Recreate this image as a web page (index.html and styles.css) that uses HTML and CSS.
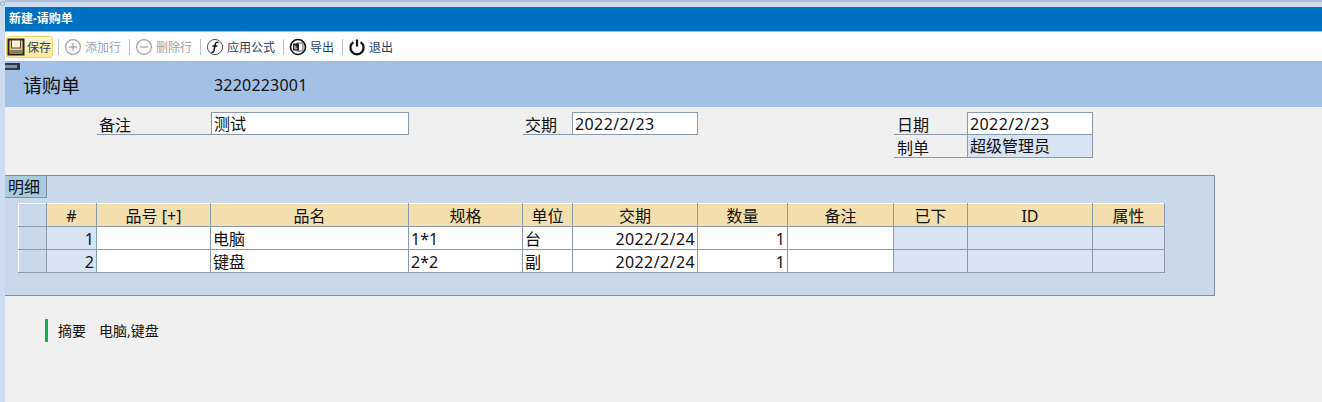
FILE: index.html
```html
<!DOCTYPE html>
<html lang="zh-CN">
<head>
<meta charset="utf-8">
<title>新建-请购单</title>
<link rel="stylesheet" href="styles.css">
</head>
<body>
<div class="app">
  <aside class="rail"><i class="ring"></i></aside>
  <div class="main">
    <div class="topstrip"></div>
    <header class="titlebar">新建-请购单</header>
    <nav class="toolbar">
      <button class="tool tool-active">
        <svg class="ico" viewBox="0 0 18 18"><rect x="1.5" y="1.5" width="15" height="15" fill="#e9d596" stroke="#222" stroke-width="2"/><rect x="4.5" y="2" width="9" height="8" fill="#fbf1cf" stroke="#4a4232" stroke-width="1"/><rect x="3" y="12" width="12" height="3.5" fill="#8d7f5c"/></svg>
        <span>保存</span>
      </button>
      <i class="sep"></i>
      <button class="tool tool-off">
        <svg class="ico" viewBox="0 0 18 18"><circle cx="9" cy="9" r="7.4" fill="none" stroke="#a6a6a6" stroke-width="1.3"/><path d="M9 5v8M5 9h8" stroke="#a6a6a6" stroke-width="1.3"/></svg>
        <span>添加行</span>
      </button>
      <i class="sep"></i>
      <button class="tool tool-off">
        <svg class="ico" viewBox="0 0 18 18"><circle cx="9" cy="9" r="7.4" fill="none" stroke="#a6a6a6" stroke-width="1.3"/><path d="M5 9h8" stroke="#a6a6a6" stroke-width="1.3"/></svg>
        <span>删除行</span>
      </button>
      <i class="sep"></i>
      <button class="tool">
        <svg class="ico" viewBox="0 0 18 18"><circle cx="9" cy="9" r="7.6" fill="none" stroke="#555" stroke-width="1"/><path d="M12.4 4.6c-1.4-.8-2.6-.2-3 1.6L8 12.6c-.4 1.6-1.4 2-2.6 1.4M6.4 8h5" fill="none" stroke="#111" stroke-width="1.5"/></svg>
        <span>应用公式</span>
      </button>
      <i class="sep"></i>
      <button class="tool">
        <svg class="ico" viewBox="0 0 18 18"><circle cx="9" cy="9" r="7.5" fill="#fff" stroke="#111" stroke-width="1.6"/><rect x="8" y="5" width="6" height="8" fill="#fff" stroke="#333" stroke-width=".8"/><rect x="4" y="5.5" width="6" height="7" fill="#222"/><path d="M5.8 7.2v3.6h2.6M5.8 9h2" stroke="#fff" stroke-width=".8" fill="none"/></svg>
        <span>导出</span>
      </button>
      <i class="sep"></i>
      <button class="tool">
        <svg class="ico" viewBox="0 0 18 18"><path d="M5.4 4.2a6.6 6.6 0 1 0 7.2 0" fill="none" stroke="#111" stroke-width="2.2"/><path d="M9 1.5v7" stroke="#111" stroke-width="2.2"/></svg>
        <span>退出</span>
      </button>
    </nav>
    <section class="band">
      <span class="handle"></span>
      <h1 class="doc-title">请购单</h1>
      <span class="doc-no">3220223001</span>
    </section>
    <section class="form">
      <label class="lbl lbl-a">备注</label><div class="val val-a">测试</div>
      <label class="lbl lbl-b">交期</label><div class="val val-b date">2022/2/23</div>
      <label class="lbl lbl-c">日期</label><div class="val val-c date">2022/2/23</div>
      <label class="lbl lbl-c lbl-c2">制单</label><div class="val val-c2 val-ro">超级管理员</div>
    </section>
    <section class="panel">
      <div class="tab">明细</div>
      <table class="grid">
        <colgroup>
          <col class="c0"><col class="c1"><col class="c2"><col class="c3"><col class="c4"><col class="c5"><col class="c6"><col class="c7"><col class="c8"><col class="c9"><col class="c10"><col class="c11">
        </colgroup>
        <thead>
          <tr><th class="rowh"></th><th>#</th><th>品号 [+]</th><th>品名</th><th>规格</th><th>单位</th><th>交期</th><th>数量</th><th>备注</th><th>已下</th><th>ID</th><th>属性</th></tr>
        </thead>
        <tbody>
          <tr><td class="rowh"></td><td class="ro num">1</td><td></td><td>电脑</td><td>1*1</td><td>台</td><td class="num date">2022/2/24</td><td class="num">1</td><td></td><td class="ro"></td><td class="ro"></td><td class="ro"></td></tr>
          <tr><td class="rowh"></td><td class="ro num">2</td><td></td><td>键盘</td><td>2*2</td><td>副</td><td class="num date">2022/2/24</td><td class="num">1</td><td></td><td class="ro"></td><td class="ro"></td><td class="ro"></td></tr>
        </tbody>
      </table>
    </section>
    <section class="summary"><span class="sum-label">摘要</span><span>电脑,键盘</span></section>
  </div>
</div>
</body>
</html>
```
FILE: styles.css
```css
* { box-sizing: border-box; }
html, body { margin: 0; height: 100%; overflow: hidden; }
body { background: #f0f0f0; color: #111; font-family: "Noto Sans", "Noto Sans CJK SC", sans-serif; font-size: 16px; }
.app { display: flex; height: 402px; }
.rail { position: relative; width: 5px; flex: none; background: #cddcf0; }
.ring { position: absolute; left: 0; top: 1px; width: 5px; height: 5px; border: 1px solid #8aa0c0; border-radius: 50%; }
.main { flex: 1; min-width: 0; display: flex; flex-direction: column; }
.topstrip { height: 7px; background: #cddcf0; border-top: 2px solid #a9bddc; }
.titlebar { height: 24px; background: #0070c0; color: #fff; font-size: 12px; font-weight: 700; line-height: 24px; padding-left: 4px; }
.toolbar { height: 31px; background: #fff; border-top: 1px solid #b5b5b5; border-bottom: 1px solid #b9b9b9; display: flex; align-items: center; padding-left: 1px; }
.tool { display: flex; align-items: center; gap: 3px; height: 22px; padding: 0 4px; margin: 0; border: 1px solid transparent; background: none; font: inherit; font-size: 12px; color: #1f3f66; }
.tool-active { width: 47px; margin-right: 2px; gap: 2px; background: linear-gradient(#fff7d8, #fde69a); border-color: #f4d25e; border-radius: 3px; padding: 0; color: #1f3f66; }
.tool-off { color: #9aa3ad; }
.ico { width: 18px; height: 18px; flex: none; }
.sep { width: 1px; height: 16px; background: #b9c4d0; margin: 0 0 0 3px; }
.band { position: relative; height: 45px; background: #a3c0e5; display: flex; align-items: center; }
.handle { position: absolute; left: 0; top: 1px; width: 15px; height: 7px; background: #7f90a8; border: solid #2d3a4d; border-width: 2px 3px 2px 0; }
.doc-title { margin: 0 0 0 18px; width: 191px; font-size: 19px; font-weight: 400; }
.doc-no { font-size: 16px; letter-spacing: .2px; }
.form { display: grid; grid-template-columns: 92px 114px 198px 114px 49px 126px 196px 73px 126px; grid-template-rows: 23px 23px; margin-top: 5px; }
.lbl { border-bottom: 1px solid #8a9aab; padding-left: 2px; line-height: 26px; white-space: nowrap; }
.val { border: 1px solid #8a9aab; background: #fff; line-height: 23px; padding-left: 2px; white-space: nowrap; overflow: hidden; }
.date { letter-spacing: .4px; }
.val-ro { background: #d8e4f3; border-top: 0; }
.lbl-a { grid-column: 2; grid-row: 1; }
.val-a { grid-column: 3; grid-row: 1; }
.lbl-b { grid-column: 5; grid-row: 1; }
.val-b { grid-column: 6; grid-row: 1; }
.lbl-c { grid-column: 8; grid-row: 1; padding-left: 3px; }
.val-c { grid-column: 9; grid-row: 1; }
.lbl-c2 { grid-row: 2; }
.val-c2 { grid-column: 9; grid-row: 2; }
.panel { width: 1210px; height: 121px; margin-top: 17px; background: #c9d9e9; border: 1px solid #7f8fa3; border-left: 0; }
.tab { width: 42px; height: 22px; background: #a9cbde; border-right: 1px solid #7f8fa3; border-bottom: 1px solid #7f8fa3; line-height: 23px; padding-left: 3px; }
.grid { border-collapse: collapse; table-layout: fixed; width: 1146px; margin: 5px 0 0 13px; }
.c0 { width: 28px; } .c1 { width: 50px; } .c2 { width: 114px; } .c3 { width: 198px; } .c4 { width: 114px; } .c5 { width: 50px; } .c6 { width: 125px; } .c7 { width: 90px; } .c8 { width: 106px; } .c9 { width: 74px; } .c10 { width: 125px; } .c11 { width: 72px; }
.grid th, .grid td { height: 23px; padding: 1px 2px 0; border: 1px solid #8a9aab; font-size: 16px; font-weight: 400; line-height: 20px; overflow: hidden; white-space: nowrap; }
.grid th { background: #f3dfad; text-align: center; border-top-color: #fff; }
.grid td { background: #fff; }
.grid .rowh { background: #c9d9e9; border-left-color: #fff; }
.grid th.rowh { border-top-color: #fff; }
.grid .ro { background: #d8e4f3; }
.grid .num { text-align: right; }
.summary { display: flex; align-items: center; gap: 13px; height: 23px; margin: 23px 0 0 40px; padding: 0 0 2px 10px; border-left: 3px solid #0fb050; font-size: 14px; }
```
